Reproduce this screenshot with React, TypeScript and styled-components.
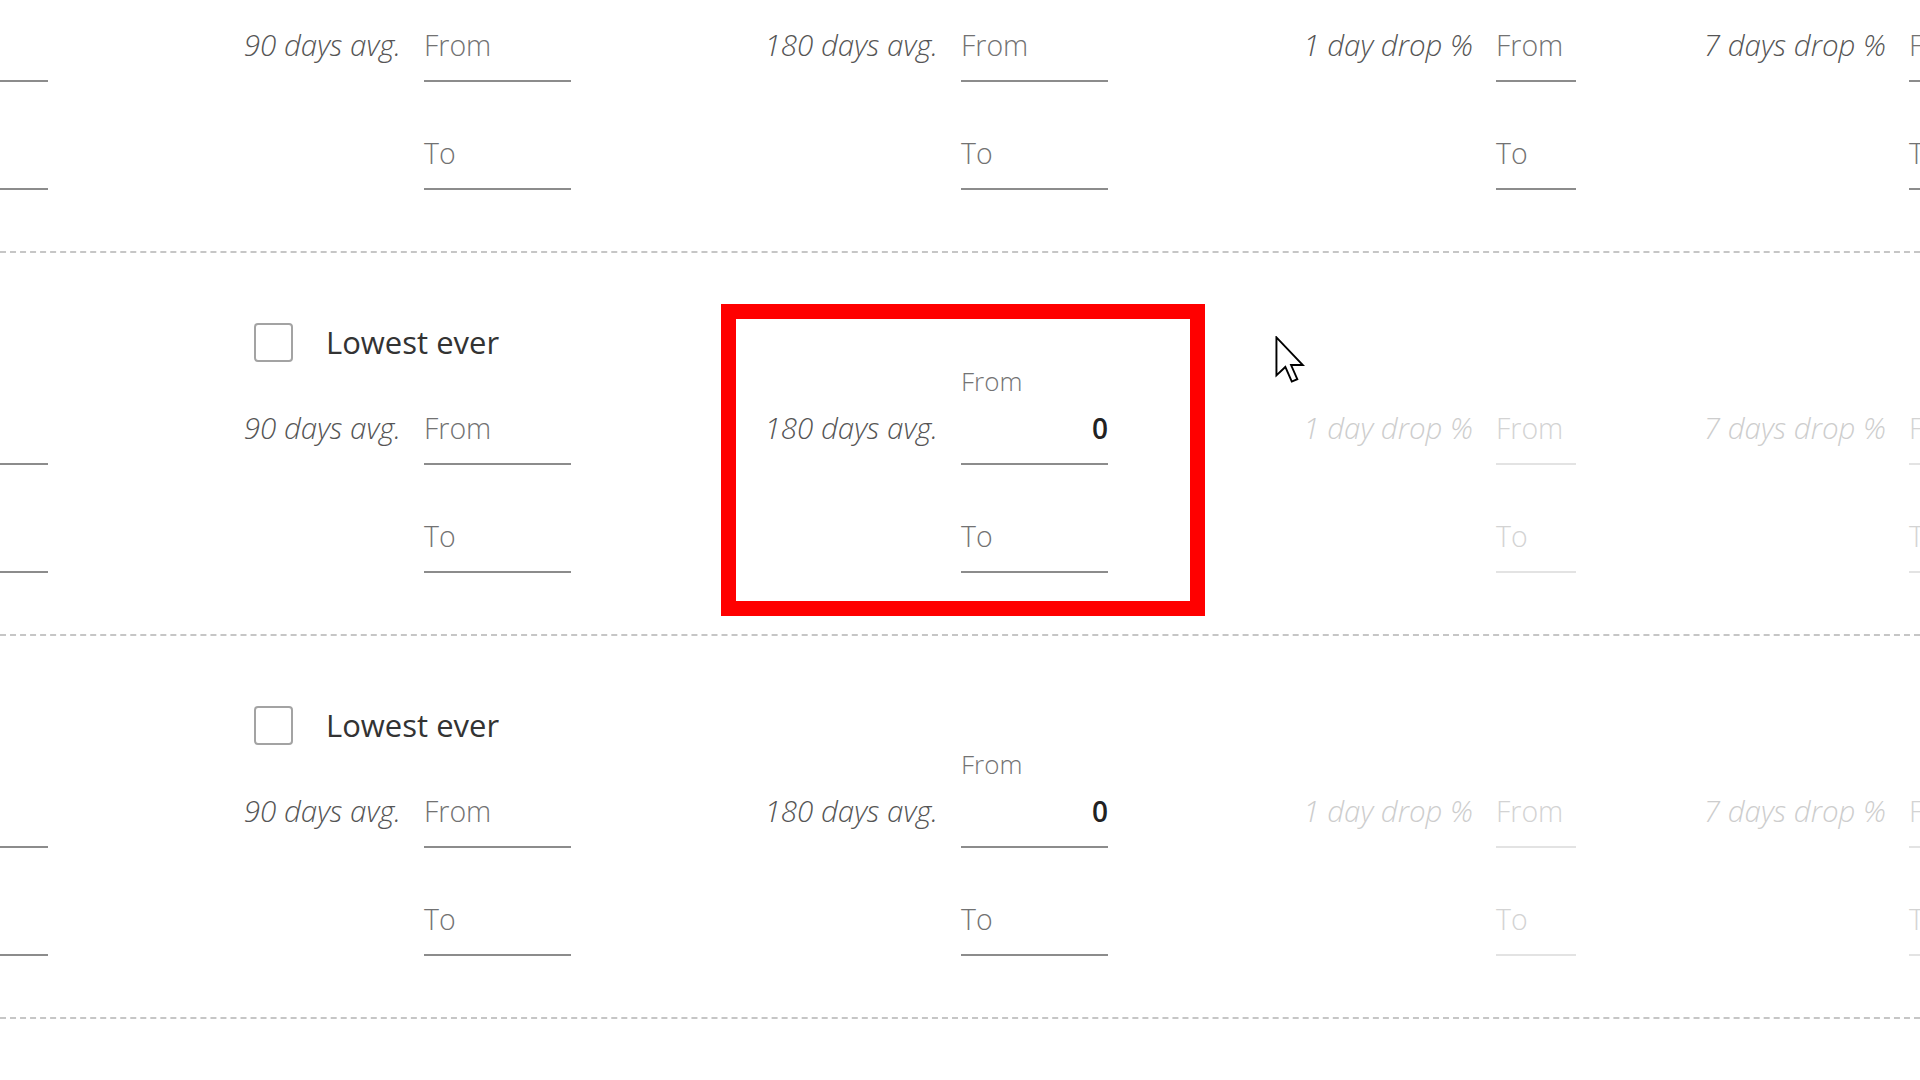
import styled, { createGlobalStyle } from "styled-components";

const GlobalStyle = createGlobalStyle`
  html, body {
    margin: 0;
    padding: 0;
    background: #fff;
    overflow: hidden;
  }
  body {
    font-family: "Open Sans", "Noto Sans", sans-serif;
  }
`;

const Page = styled.div`
  position: relative;
  width: 1920px;
  height: 1080px;
  overflow: hidden;
  background: #fff;
`;

const Section = styled.div<{ $top: number }>`
  display: flex;
  flex-direction: column;
  padding: ${(p) => p.$top}px 0 61px;
  border-bottom: 2px dashed #c6c6c6;
`;

const CheckRow = styled.label`
  display: flex;
  align-items: center;
  gap: 33px;
  height: 40px;
  padding-left: 254px;
  margin-bottom: 43px;
`;

const Box = styled.span`
  width: 39px;
  height: 39px;
  box-sizing: border-box;
  border: 2px solid #a3a3a3;
  border-radius: 4px;
  background: #fff;
`;

const CheckText = styled.span`
  font-size: 31px;
  line-height: 40px;
  color: #333;
`;

const Fields = styled.div`
  display: flex;
  align-items: flex-start;
`;

const Group = styled.div`
  display: flex;
  gap: 23px;
  flex-shrink: 0;
`;

const Label = styled.div<{ $w: number; $faded: boolean }>`
  width: ${(p) => p.$w}px;
  height: 60px;
  box-sizing: border-box;
  padding-bottom: 19px;
  display: flex;
  align-items: flex-end;
  justify-content: flex-end;
  font-size: 29.5px;
  line-height: 36px;
  font-style: italic;
  font-weight: 300;
  white-space: nowrap;
  color: ${(p) => (p.$faded ? "#cdcdcd" : "#555")};
`;

const Inputs = styled.div<{ $w: number }>`
  display: flex;
  flex-direction: column;
  gap: 48px;
  width: ${(p) => p.$w}px;
  flex-shrink: 0;
`;

const Input = styled.div<{ $faded: boolean }>`
  position: relative;
  height: 60px;
  box-sizing: border-box;
  padding-bottom: 17px;
  display: flex;
  align-items: flex-end;
  border-bottom: 2px solid ${(p) => (p.$faded ? "#e3e3e3" : "#8c8c8c")};
  font-size: 28.5px;
  line-height: 36px;
  font-weight: 300;
  white-space: nowrap;
  color: ${(p) => (p.$faded ? "#d3d3d3" : "#727272")};
`;

const Value = styled.span`
  margin-left: auto;
  font-size: 28px;
  font-weight: 600;
  color: #222;
`;

const FloatLabel = styled.span`
  position: absolute;
  left: 0;
  top: -39px;
  font-size: 26px;
  line-height: 30px;
  font-weight: 300;
  color: #737373;
`;

const Highlight = styled.div`
  position: absolute;
  left: 721px;
  top: 304px;
  width: 484px;
  height: 312px;
  box-sizing: border-box;
  border: 15px solid #ff0000;
  pointer-events: none;
`;

const Cursor = styled.svg`
  position: absolute;
  left: 1275px;
  top: 336px;
`;

type Column = {
  label?: string;
  labelW: number;
  inputW: number;
  fadeable?: boolean;
  holdsValue?: boolean;
};

const columns: Column[] = [
  { labelW: 0, inputW: 48 },
  { label: "90 days avg.", labelW: 353, inputW: 147 },
  { label: "180 days avg.", labelW: 367, inputW: 147, holdsValue: true },
  { label: "1 day drop %", labelW: 365, inputW: 80, fadeable: true },
  { label: "7 days drop %", labelW: 310, inputW: 147, fadeable: true },
];

const sections = [
  { lowest: false, value: null as string | null, faded: false, top: 22 },
  { lowest: true, value: "0", faded: true, top: 69 },
  { lowest: true, value: "0", faded: true, top: 69 },
];

function FieldGroup({
  col,
  faded,
  value,
}: {
  col: Column;
  faded: boolean;
  value: string | null;
}) {
  const dim = faded && !!col.fadeable;
  const filled = col.holdsValue && value !== null;
  return (
    <Group>
      {col.label && (
        <Label $w={col.labelW} $faded={dim}>
          {col.label}
        </Label>
      )}
      <Inputs $w={col.inputW}>
        <Input $faded={dim}>
          {col.label &&
            (filled ? (
              <>
                <FloatLabel>From</FloatLabel>
                <Value>{value}</Value>
              </>
            ) : (
              "From"
            ))}
        </Input>
        <Input $faded={dim}>{col.label && "To"}</Input>
      </Inputs>
    </Group>
  );
}

export default function App() {
  return (
    <>
      <GlobalStyle />
      <Page>
        {sections.map((s, i) => (
          <Section key={i} $top={s.top}>
            {s.lowest && (
              <CheckRow>
                <Box />
                <CheckText>Lowest ever</CheckText>
              </CheckRow>
            )}
            <Fields>
              {columns.map((c, j) => (
                <FieldGroup key={j} col={c} faded={s.faded} value={s.value} />
              ))}
            </Fields>
          </Section>
        ))}
        <Highlight />
        <Cursor width="30" height="48" viewBox="0 0 12.5 20">
          <path
            d="M0.6 0.6 L0.6 16.4 L4.3 12.9 L7 19 L9.3 18 L6.7 12.1 L11.6 12.1 Z"
            fill="#fff"
            stroke="#000"
            strokeWidth="0.8"
            strokeLinejoin="miter"
          />
        </Cursor>
      </Page>
    </>
  );
}
